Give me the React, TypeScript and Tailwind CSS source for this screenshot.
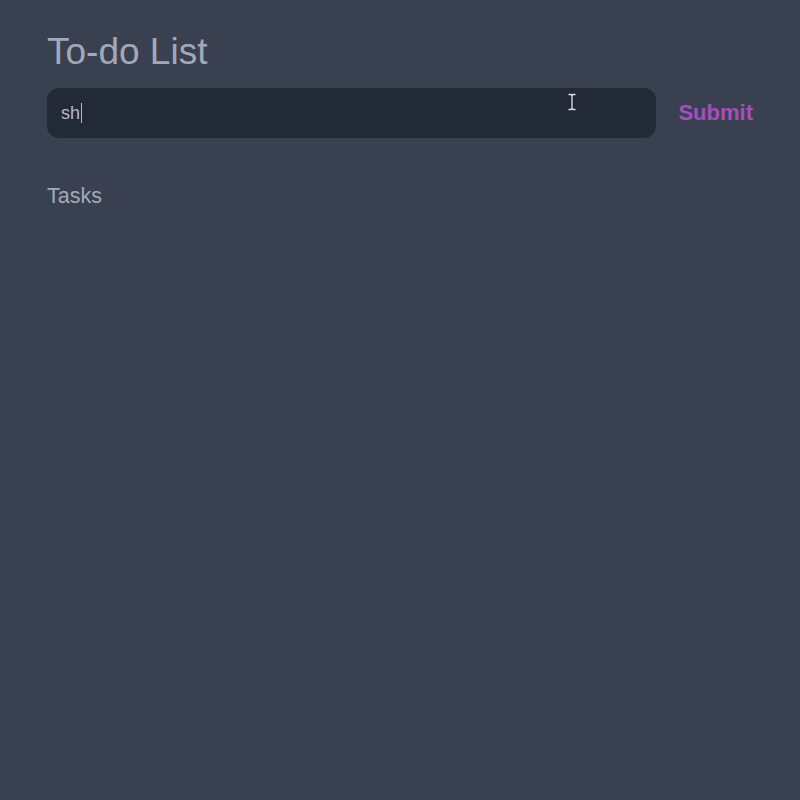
import React from "react";

export default function App() {
  return (
    <div
      className="min-h-screen w-full bg-[#394150] px-[47px] pt-[28px]"
      style={{ fontFamily: '"Liberation Sans", Arial, sans-serif' }}
    >
      <h1 className="text-[37px] leading-[48px] text-[#a3a8b8]">To-do List</h1>
      <div className="mt-[12px] flex items-center gap-[22px]">
        <div className="relative flex h-[50px] flex-1 items-center rounded-[12px] bg-[#222a38] px-[14px]">
          <span className="text-[18px] text-[#b4b8c6]">sh</span>
          <span className="ml-[1px] h-[20px] w-[1px] bg-[#b4b8c6]" />
          <svg
            className="absolute left-[520px] top-[5px]"
            width="10"
            height="18"
            viewBox="0 0 10 18"
          >
            <path
              d="M1.5 1.5h2.5l1 1 1-1h2.5M5 2.5v13M1.5 16.5h2.5l1-1 1 1h2.5"
              stroke="#1b1f28"
              strokeWidth="2.6"
              fill="none"
            />
            <path
              d="M1.5 1.5h2.5l1 1 1-1h2.5M5 2.5v13M1.5 16.5h2.5l1-1 1 1h2.5"
              stroke="#e6e8ee"
              strokeWidth="1.3"
              fill="none"
            />
          </svg>
        </div>
        <button className="mb-[2px] text-[22px] font-bold text-[#a64ec0]">Submit</button>
      </div>
      <h2 className="mt-[43px] text-[21.5px] leading-[30px] text-[#a3a8b8]">Tasks</h2>
    </div>
  );
}
